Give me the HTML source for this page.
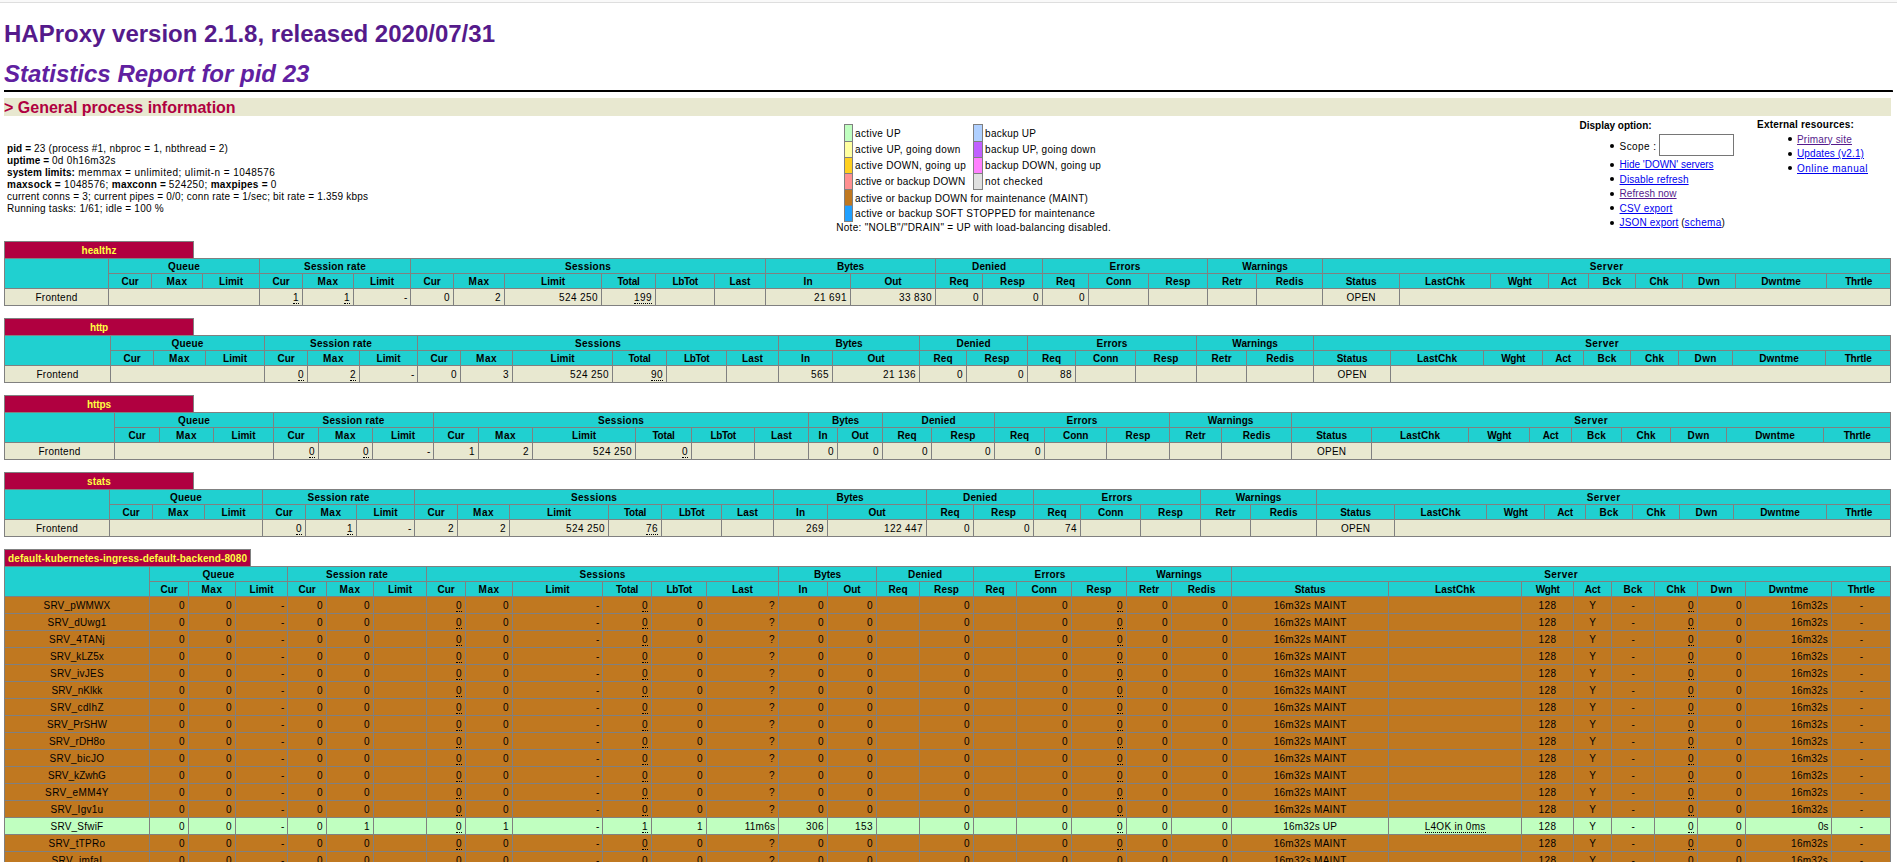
<!DOCTYPE html>
<html><head><meta charset="utf-8"><title>Statistics Report for HAProxy</title><style>
html{background:white;height:862px;overflow:hidden;}
body { font-family: "Liberation Sans", sans-serif; font-size: 12px; font-weight: normal; color: black; background: white; margin:0; padding:0; width:1897px; height:862px; overflow:hidden;}
#pg{position:relative; width:1897px; height:862px; overflow:hidden; padding:0 6px 0 4px; box-sizing:border-box;}
th,td { font-size: 10px; line-height:12px;}

h1 { font-size: 24px; margin-top:19px; margin-bottom: 12px;}
h1 a{color:#551a8b;text-decoration:none;position:relative;top:1px;}
h2 span,h3 span.t{position:relative;top:1px;}
h2 { font-family: "Liberation Sans", sans-serif; font-size: 24px; font-weight: bold; font-style: italic; color: #6020a0; margin-top: 0em; margin-bottom: 0em;}
h3 { font-family: "Liberation Sans", sans-serif; font-size: 16px; font-weight: bold; color: #b00040; background: #e8e8d0; margin-top: 0em; margin-bottom: 0em;}
li { margin-top: 0.25em; margin-right: 2em; list-style:none; position:relative;}
li::before{content:'';display:inline-block;width:4.2px;height:4.2px;border-radius:50%;background:black;margin-left:-9.3px;margin-right:5.1px;vertical-align:1.15px;}
table.lgd{position:relative;top:0px;}
table.lgd tr:nth-child(5) td{padding-bottom:0.5px;}
table.lgd td.backup_up{padding-right:3px;}
td.opt > *{position:relative;top:1px;left:0.5px;}
td.opt2 > *{position:relative;top:0px;}
td.opt li.sc0{position:relative;top:-1px;}
.hr {margin-top: 0.25em; border-color: black; border-bottom-style: solid;}
.titre	{background: #20D0D0;color: #000000; font-weight: bold; text-align: center;}
.frontend	{background: #e8e8d0;}
.backend	{background: #e8e8d0;}
.active_down		{background: #ff9090;}
.active_going_up		{background: #ffd020;}
.active_going_down	{background: #ffffa0;}
.active_up		{background: #c0ffc0;}
.active_draining		{background: #20a0FF;}
.active_no_check		{background: #e0e0e0;}
.backup_going_up		{background: #ff80ff;}
.backup_going_down	{background: #c060ff;}
.backup_up		{background: #b0d0ff;}
.maintain	{background: #c07820;}
.rls      {letter-spacing: 0.2em; margin-right: 1px;}
a.px {color: #ffff40; text-decoration: none;}
a.lfsb {color: #000000; text-decoration: none;}
a.l {color:#0000ee;}
a.v {color:#551a8b;}
table.tbl { border-collapse: collapse; border-style: none;}
table.fx{table-layout:fixed;width:1887px;}
table.tbl td { text-align: right; border-width: 1px 1px 1px 1px; border-style: solid solid solid solid; padding: 3px 3px 1px; border-color: gray; white-space: nowrap;}
table.tbl td.ac { text-align: center;}
table.tbl th { border-width: 1px; border-style: solid solid solid solid; border-color: gray; padding:2px 1px 0;}
table.tbl th.pxname { background: #b00040; color: #ffff40; font-weight: bold; border-style: solid solid none solid; padding: 3px 3px 1px; white-space: nowrap;}
table.tbl th.empty { border-style: none; empty-cells: hide; background: white;}
table.lgd { border-collapse: collapse; border-width: 1px; border-style: none none none solid; border-color: black;}
table.lgd td { border-width: 1px; border-style: solid solid solid solid; border-color: gray; padding: 3px 2px 1px;}
table.lgd td.noborder { border-style: none; padding: 3px 2px 1px; white-space: nowrap;}
u {text-decoration:none; border-bottom: 1px dotted black;}
input.sc{font-family:"Liberation Sans",sans-serif;font-size:13.333px;box-sizing:border-box;width:75px;height:22px;border:1px solid #767676;padding:1px 2px;margin:0 0 0 -1px;vertical-align:baseline;background:white;}
#topbar{position:absolute;left:0;top:0;width:1897px;height:3px;background:#f9f9f9;}
#topbar div{position:absolute;left:0;top:2px;width:100%;height:1px;background:#dedede;}
</style></head><body><div id="pg">
<div id="topbar"><div></div></div>
<h1><a href="#">HAProxy version 2.1.8, released 2020/07/31</a></h1>
<h2><span>Statistics Report for pid 23</span></h2>
<hr width="100%" class="hr">
<h3><span class="t">&gt; General process information</span></h3>
<table border="0"><tbody><tr><td align="left" nowrap="" width="1%">
<p><b><span style="letter-spacing: 0.1px;">pid = </span></b><span style="letter-spacing: 0.23px;"> 23 (process #1, nbproc = 1, nbthread = 2)</span><br>
<b><span style="letter-spacing: 0.09px;">uptime = </span></b><span style="letter-spacing: 0.3px;"> 0d 0h16m32s</span><br>
<b><span style="letter-spacing: 0.09px;">system limits:</span></b><span style="letter-spacing: 0.43px;"> memmax = unlimited; ulimit-n = 1048576</span><br>
<b><span style="letter-spacing: 0.28px;">maxsock = </span></b><span style="letter-spacing: 0.37px;"> 1048576; </span><b><span style="letter-spacing: 0.17px;">maxconn = </span></b><span style="letter-spacing: 0.37px;"> 524250; </span><b><span style="letter-spacing: 0.22px;">maxpipes = </span></b><span style="letter-spacing: 0.33px;"> 0</span><br>
<span class="xls" style="--x:-0.043"><span style="letter-spacing: 0.2px;">current conns = 3; current pipes = 0/0; conn rate = 1/sec; bit rate = 1.359 kbps</span></span><br><span style="letter-spacing: 0.23px;">
Running tasks: 1/61; idle = 100 %</span><br>
</p></td><td align="center" nowrap="">
<table class="lgd"><tbody><tr>
<td class="active_up"><span style="letter-spacing: 0.22px;">&nbsp;</span></td><td class="noborder"><span style="letter-spacing: 0.34px;">active UP </span></td><td class="backup_up"><span style="letter-spacing: 0.22px;">&nbsp;</span></td><td class="noborder"><span style="letter-spacing: 0.23px;">backup UP </span></td></tr><tr>
<td class="active_going_down"></td><td class="noborder"><span style="letter-spacing: 0.35px;">active UP, going down </span></td><td class="backup_going_down"></td><td class="noborder"><span style="letter-spacing: 0.3px;">backup UP, going down </span></td></tr><tr>
<td class="active_going_up"></td><td class="noborder"><span style="letter-spacing: 0.31px;">active DOWN, going up </span></td><td class="backup_going_up"></td><td class="noborder"><span style="letter-spacing: 0.26px;">backup DOWN, going up </span></td></tr><tr>
<td class="active_down"></td><td class="noborder xls" style="--x:-0.087"><span style="letter-spacing: 0.14px;">active or backup DOWN &nbsp;</span></td><td class="active_no_check"></td><td class="noborder"><span style="letter-spacing: 0.36px;">not checked </span></td></tr><tr>
<td class="maintain"></td><td class="noborder xls" style="--x:-0.043" colspan="3"><span style="letter-spacing: 0.24px;">active or backup DOWN for maintenance (MAINT) &nbsp;</span></td></tr><tr>
<td class="active_draining"></td><td class="noborder xls" style="--x:-0.053" colspan="3"><span style="letter-spacing: 0.29px;">active or backup SOFT STOPPED for maintenance &nbsp;</span></td></tr></tbody></table><span style="letter-spacing: 0.3px;">
Note: "NOLB"/"DRAIN" = UP with load-balancing disabled.</span></td><td class="opt" align="left" valign="top" nowrap="" width="1%"><b><span style="letter-spacing: -0.01px;">Display option:</span></b><ul style="margin-top: 0.25em;">
<li class="sc0"><span style="letter-spacing: 0.41px;">Scope : </span><form style="display:inline;"><input class="sc" type="text" value=""></form>
</li><li><a class="l" href="#"><span style="letter-spacing: -0.02px;">Hide 'DOWN' servers</span></a>
</li><li><a class="l" href="#"><span style="letter-spacing: 0.12px;">Disable refresh</span></a>
</li><li><a class="v" href="#"><span style="letter-spacing: 0.08px;">Refresh now</span></a>
</li><li><a class="l" href="#"><span style="letter-spacing: 0.19px;">CSV export</span></a>
</li><li><a class="l" href="#"><span style="letter-spacing: 0.16px;">JSON export</span></a><span style="letter-spacing: -0.05px;"> (</span><a class="l" href="#"><span style="letter-spacing: 0.33px;">schema</span></a><span style="letter-spacing: -0.05px;">)
</span></li></ul></td><td class="opt2" align="left" valign="top" nowrap="" width="1%"><b><span style="letter-spacing: 0.19px;">External resources:</span></b><ul style="margin-top: 0.25em;">
<li><a class="v" href="#"><span style="letter-spacing: 0.18px;">Primary site</span></a><br>
</li><li><a class="l" href="#"><span style="letter-spacing: 0.1px;">Updates (v2.1)</span></a><br>
</li><li><a class="l" href="#"><span style="letter-spacing: 0.5px;">Online manual</span></a><br>
</li></ul></td></tr></tbody></table>
<table class="tbl fx"><colgroup><col style="width:189px"><col></colgroup><tbody><tr class="titre"><th class="pxname"><a class="px"><span style="letter-spacing: 0.08px;">healthz</span></a></th><th class="empty"></th></tr></tbody></table>
<table class="tbl fx"><colgroup><col style="width:104px"><col style="width:43px"><col style="width:51px"><col style="width:57px"><col style="width:43px"><col style="width:51px"><col style="width:57px"><col style="width:43px"><col style="width:51px"><col style="width:97px"><col style="width:54px"><col style="width:59px"><col style="width:51px"><col style="width:85px"><col style="width:85px"><col style="width:47px"><col style="width:60px"><col style="width:46px"><col style="width:60px"><col style="width:59px"><col style="width:49px"><col style="width:66px"><col style="width:77px"><col style="width:91px"><col style="width:58px"><col style="width:40px"><col style="width:47px"><col style="width:47px"><col style="width:53px"><col style="width:91px"><col style="width:64px"></colgroup><tbody><tr class="titre"><th rowspan="2"></th><th colspan="3"><span style="letter-spacing: 0.18px;">Queue</span></th><th colspan="3"><span style="letter-spacing: 0.21px;">Session rate</span></th><th colspan="6"><span style="letter-spacing: 0.26px;">Sessions</span></th><th colspan="2"><span style="letter-spacing: -0.05px;">Bytes</span></th><th colspan="2"><span style="letter-spacing: 0.11px;">Denied</span></th><th colspan="3"><span style="letter-spacing: 0.16px;">Errors</span></th><th colspan="2"><span style="letter-spacing: 0.06px;">Warnings</span></th><th colspan="9"><span style="letter-spacing: 0.48px;">Server</span></th></tr>
<tr class="titre"><th><span style="letter-spacing: -0.07px;">Cur</span></th><th><span style="letter-spacing: 0.52px;">Max</span></th><th><span style="letter-spacing: 0.02px;">Limit</span></th><th><span style="letter-spacing: -0.07px;">Cur</span></th><th><span style="letter-spacing: 0.52px;">Max</span></th><th><span style="letter-spacing: 0.02px;">Limit</span></th><th><span style="letter-spacing: -0.07px;">Cur</span></th><th><span style="letter-spacing: 0.52px;">Max</span></th><th><span style="letter-spacing: 0.02px;">Limit</span></th><th><span style="letter-spacing: -0.18px;">Total</span></th><th><span style="letter-spacing: -0.35px;">LbTot</span></th><th><span style="letter-spacing: 0.11px;">Last</span></th><th><span style="letter-spacing: 0.06px;">In</span></th><th><span style="letter-spacing: -0.07px;">Out</span></th><th><span style="letter-spacing: 0.04px;">Req</span></th><th><span style="letter-spacing: 0.14px;">Resp</span></th><th><span style="letter-spacing: 0.04px;">Req</span></th><th><span style="letter-spacing: -0.14px;">Conn</span></th><th><span style="letter-spacing: 0.14px;">Resp</span></th><th><span style="letter-spacing: 0px;">Retr</span></th><th><span style="letter-spacing: 0.15px;">Redis</span></th><th><span style="letter-spacing: 0.07px;">Status</span></th><th><span style="letter-spacing: 0.08px;">LastChk</span></th><th><span style="letter-spacing: -0.25px;">Wght</span></th><th><span style="letter-spacing: -0.04px;">Act</span></th><th><span style="letter-spacing: 0.22px;">Bck</span></th><th><span style="letter-spacing: 0.04px;">Chk</span></th><th><span style="letter-spacing: 0.3px;">Dwn</span></th><th><span style="letter-spacing: 0.18px;">Dwntme</span></th><th><span style="letter-spacing: -0.13px;">Thrtle</span></th></tr>
<tr class="frontend"><td class="ac"><a class="lfsb"><span style="letter-spacing: 0.25px;">Frontend</span></a></td><td colspan="3"></td><td><u><span style="letter-spacing: 0.44px;">1</span></u></td><td><u><span style="letter-spacing: 0.44px;">1</span></u></td><td><span style="letter-spacing: -0.33px;">-</span></td><td><span style="letter-spacing: 0.44px;">0</span></td><td><span style="letter-spacing: 0.44px;">2</span></td><td><span style="letter-spacing: 0.44px;">52</span><span class="rls"><span style="letter-spacing: 2.44px;">4</span></span><span style="letter-spacing: 0.44px;">250</span></td><td><u><span style="letter-spacing: 0.44px;">199</span></u></td><td></td><td></td><td><span style="letter-spacing: 0.44px;">2</span><span class="rls"><span style="letter-spacing: 2.44px;">1</span></span><span style="letter-spacing: 0.44px;">691</span></td><td><span style="letter-spacing: 0.44px;">3</span><span class="rls"><span style="letter-spacing: 2.44px;">3</span></span><span style="letter-spacing: 0.44px;">830</span></td><td><span style="letter-spacing: 0.44px;">0</span></td><td><span style="letter-spacing: 0.44px;">0</span></td><td><span style="letter-spacing: 0.44px;">0</span></td><td></td><td></td><td></td><td></td><td class="ac"><span style="letter-spacing: 0.17px;">OPEN</span></td><td class="ac" colspan="8"></td></tr></tbody></table><p>
</p><table class="tbl fx"><colgroup><col style="width:189px"><col></colgroup><tbody><tr class="titre"><th class="pxname"><a class="px"><span style="letter-spacing: -0.22px;">http</span></a></th><th class="empty"></th></tr></tbody></table>
<table class="tbl fx"><colgroup><col style="width:106px"><col style="width:43px"><col style="width:52px"><col style="width:59px"><col style="width:43px"><col style="width:52px"><col style="width:58px"><col style="width:43px"><col style="width:52px"><col style="width:100px"><col style="width:54px"><col style="width:60px"><col style="width:52px"><col style="width:54px"><col style="width:87px"><col style="width:47px"><col style="width:61px"><col style="width:48px"><col style="width:60px"><col style="width:61px"><col style="width:50px"><col style="width:67px"><col style="width:77px"><col style="width:93px"><col style="width:59px"><col style="width:41px"><col style="width:47px"><col style="width:48px"><col style="width:54px"><col style="width:93px"><col style="width:65px"></colgroup><tbody><tr class="titre"><th rowspan="2"></th><th colspan="3"><span style="letter-spacing: 0.18px;">Queue</span></th><th colspan="3"><span style="letter-spacing: 0.21px;">Session rate</span></th><th colspan="6"><span style="letter-spacing: 0.26px;">Sessions</span></th><th colspan="2"><span style="letter-spacing: -0.05px;">Bytes</span></th><th colspan="2"><span style="letter-spacing: 0.11px;">Denied</span></th><th colspan="3"><span style="letter-spacing: 0.16px;">Errors</span></th><th colspan="2"><span style="letter-spacing: 0.06px;">Warnings</span></th><th colspan="9"><span style="letter-spacing: 0.48px;">Server</span></th></tr>
<tr class="titre"><th><span style="letter-spacing: -0.07px;">Cur</span></th><th><span style="letter-spacing: 0.52px;">Max</span></th><th><span style="letter-spacing: 0.02px;">Limit</span></th><th><span style="letter-spacing: -0.07px;">Cur</span></th><th><span style="letter-spacing: 0.52px;">Max</span></th><th><span style="letter-spacing: 0.02px;">Limit</span></th><th><span style="letter-spacing: -0.07px;">Cur</span></th><th><span style="letter-spacing: 0.52px;">Max</span></th><th><span style="letter-spacing: 0.02px;">Limit</span></th><th><span style="letter-spacing: -0.18px;">Total</span></th><th><span style="letter-spacing: -0.35px;">LbTot</span></th><th><span style="letter-spacing: 0.11px;">Last</span></th><th><span style="letter-spacing: 0.06px;">In</span></th><th><span style="letter-spacing: -0.07px;">Out</span></th><th><span style="letter-spacing: 0.04px;">Req</span></th><th><span style="letter-spacing: 0.14px;">Resp</span></th><th><span style="letter-spacing: 0.04px;">Req</span></th><th><span style="letter-spacing: -0.14px;">Conn</span></th><th><span style="letter-spacing: 0.14px;">Resp</span></th><th><span style="letter-spacing: 0px;">Retr</span></th><th><span style="letter-spacing: 0.15px;">Redis</span></th><th><span style="letter-spacing: 0.07px;">Status</span></th><th><span style="letter-spacing: 0.08px;">LastChk</span></th><th><span style="letter-spacing: -0.25px;">Wght</span></th><th><span style="letter-spacing: -0.04px;">Act</span></th><th><span style="letter-spacing: 0.22px;">Bck</span></th><th><span style="letter-spacing: 0.04px;">Chk</span></th><th><span style="letter-spacing: 0.3px;">Dwn</span></th><th><span style="letter-spacing: 0.18px;">Dwntme</span></th><th><span style="letter-spacing: -0.13px;">Thrtle</span></th></tr>
<tr class="frontend"><td class="ac"><a class="lfsb"><span style="letter-spacing: 0.25px;">Frontend</span></a></td><td colspan="3"></td><td><u><span style="letter-spacing: 0.44px;">0</span></u></td><td><u><span style="letter-spacing: 0.44px;">2</span></u></td><td><span style="letter-spacing: -0.33px;">-</span></td><td><span style="letter-spacing: 0.44px;">0</span></td><td><span style="letter-spacing: 0.44px;">3</span></td><td><span style="letter-spacing: 0.44px;">52</span><span class="rls"><span style="letter-spacing: 2.44px;">4</span></span><span style="letter-spacing: 0.44px;">250</span></td><td><u><span style="letter-spacing: 0.44px;">90</span></u></td><td></td><td></td><td><span style="letter-spacing: 0.44px;">565</span></td><td><span style="letter-spacing: 0.44px;">2</span><span class="rls"><span style="letter-spacing: 2.44px;">1</span></span><span style="letter-spacing: 0.44px;">136</span></td><td><span style="letter-spacing: 0.44px;">0</span></td><td><span style="letter-spacing: 0.44px;">0</span></td><td><span style="letter-spacing: 0.44px;">88</span></td><td></td><td></td><td></td><td></td><td class="ac"><span style="letter-spacing: 0.17px;">OPEN</span></td><td class="ac" colspan="8"></td></tr></tbody></table><p>
</p><table class="tbl fx"><colgroup><col style="width:189px"><col></colgroup><tbody><tr class="titre"><th class="pxname"><a class="px"><span style="letter-spacing: -0.09px;">https</span></a></th><th class="empty"></th></tr></tbody></table>
<table class="tbl fx"><colgroup><col style="width:110px"><col style="width:45px"><col style="width:54px"><col style="width:60px"><col style="width:45px"><col style="width:54px"><col style="width:61px"><col style="width:45px"><col style="width:54px"><col style="width:103px"><col style="width:56px"><col style="width:63px"><col style="width:54px"><col style="width:29px"><col style="width:45px"><col style="width:49px"><col style="width:63px"><col style="width:50px"><col style="width:62px"><col style="width:63px"><col style="width:52px"><col style="width:70px"><col style="width:80px"><col style="width:97px"><col style="width:61px"><col style="width:42px"><col style="width:50px"><col style="width:49px"><col style="width:56px"><col style="width:97px"><col style="width:67px"></colgroup><tbody><tr class="titre"><th rowspan="2"></th><th colspan="3"><span style="letter-spacing: 0.18px;">Queue</span></th><th colspan="3"><span style="letter-spacing: 0.21px;">Session rate</span></th><th colspan="6"><span style="letter-spacing: 0.26px;">Sessions</span></th><th colspan="2"><span style="letter-spacing: -0.05px;">Bytes</span></th><th colspan="2"><span style="letter-spacing: 0.11px;">Denied</span></th><th colspan="3"><span style="letter-spacing: 0.16px;">Errors</span></th><th colspan="2"><span style="letter-spacing: 0.06px;">Warnings</span></th><th colspan="9"><span style="letter-spacing: 0.48px;">Server</span></th></tr>
<tr class="titre"><th><span style="letter-spacing: -0.07px;">Cur</span></th><th><span style="letter-spacing: 0.52px;">Max</span></th><th><span style="letter-spacing: 0.02px;">Limit</span></th><th><span style="letter-spacing: -0.07px;">Cur</span></th><th><span style="letter-spacing: 0.52px;">Max</span></th><th><span style="letter-spacing: 0.02px;">Limit</span></th><th><span style="letter-spacing: -0.07px;">Cur</span></th><th><span style="letter-spacing: 0.52px;">Max</span></th><th><span style="letter-spacing: 0.02px;">Limit</span></th><th><span style="letter-spacing: -0.18px;">Total</span></th><th><span style="letter-spacing: -0.35px;">LbTot</span></th><th><span style="letter-spacing: 0.11px;">Last</span></th><th><span style="letter-spacing: 0.06px;">In</span></th><th><span style="letter-spacing: -0.07px;">Out</span></th><th><span style="letter-spacing: 0.04px;">Req</span></th><th><span style="letter-spacing: 0.14px;">Resp</span></th><th><span style="letter-spacing: 0.04px;">Req</span></th><th><span style="letter-spacing: -0.14px;">Conn</span></th><th><span style="letter-spacing: 0.14px;">Resp</span></th><th><span style="letter-spacing: 0px;">Retr</span></th><th><span style="letter-spacing: 0.15px;">Redis</span></th><th><span style="letter-spacing: 0.07px;">Status</span></th><th><span style="letter-spacing: 0.08px;">LastChk</span></th><th><span style="letter-spacing: -0.25px;">Wght</span></th><th><span style="letter-spacing: -0.04px;">Act</span></th><th><span style="letter-spacing: 0.22px;">Bck</span></th><th><span style="letter-spacing: 0.04px;">Chk</span></th><th><span style="letter-spacing: 0.3px;">Dwn</span></th><th><span style="letter-spacing: 0.18px;">Dwntme</span></th><th><span style="letter-spacing: -0.13px;">Thrtle</span></th></tr>
<tr class="frontend"><td class="ac"><a class="lfsb"><span style="letter-spacing: 0.25px;">Frontend</span></a></td><td colspan="3"></td><td><u><span style="letter-spacing: 0.44px;">0</span></u></td><td><u><span style="letter-spacing: 0.44px;">0</span></u></td><td><span style="letter-spacing: -0.33px;">-</span></td><td><span style="letter-spacing: 0.44px;">1</span></td><td><span style="letter-spacing: 0.44px;">2</span></td><td><span style="letter-spacing: 0.44px;">52</span><span class="rls"><span style="letter-spacing: 2.44px;">4</span></span><span style="letter-spacing: 0.44px;">250</span></td><td><u><span style="letter-spacing: 0.44px;">0</span></u></td><td></td><td></td><td><span style="letter-spacing: 0.44px;">0</span></td><td><span style="letter-spacing: 0.44px;">0</span></td><td><span style="letter-spacing: 0.44px;">0</span></td><td><span style="letter-spacing: 0.44px;">0</span></td><td><span style="letter-spacing: 0.44px;">0</span></td><td></td><td></td><td></td><td></td><td class="ac"><span style="letter-spacing: 0.17px;">OPEN</span></td><td class="ac" colspan="8"></td></tr></tbody></table><p>
</p><table class="tbl fx"><colgroup><col style="width:189px"><col></colgroup><tbody><tr class="titre"><th class="pxname"><a class="px"><span style="letter-spacing: 0.13px;">stats</span></a></th><th class="empty"></th></tr></tbody></table>
<table class="tbl fx"><colgroup><col style="width:105px"><col style="width:43px"><col style="width:52px"><col style="width:58px"><col style="width:43px"><col style="width:51px"><col style="width:58px"><col style="width:43px"><col style="width:52px"><col style="width:99px"><col style="width:53px"><col style="width:60px"><col style="width:52px"><col style="width:54px"><col style="width:99px"><col style="width:47px"><col style="width:60px"><col style="width:47px"><col style="width:60px"><col style="width:60px"><col style="width:50px"><col style="width:66px"><col style="width:78px"><col style="width:92px"><col style="width:58px"><col style="width:41px"><col style="width:47px"><col style="width:47px"><col style="width:54px"><col style="width:93px"><col style="width:64px"></colgroup><tbody><tr class="titre"><th rowspan="2"></th><th colspan="3"><span style="letter-spacing: 0.18px;">Queue</span></th><th colspan="3"><span style="letter-spacing: 0.21px;">Session rate</span></th><th colspan="6"><span style="letter-spacing: 0.26px;">Sessions</span></th><th colspan="2"><span style="letter-spacing: -0.05px;">Bytes</span></th><th colspan="2"><span style="letter-spacing: 0.11px;">Denied</span></th><th colspan="3"><span style="letter-spacing: 0.16px;">Errors</span></th><th colspan="2"><span style="letter-spacing: 0.06px;">Warnings</span></th><th colspan="9"><span style="letter-spacing: 0.48px;">Server</span></th></tr>
<tr class="titre"><th><span style="letter-spacing: -0.07px;">Cur</span></th><th><span style="letter-spacing: 0.52px;">Max</span></th><th><span style="letter-spacing: 0.02px;">Limit</span></th><th><span style="letter-spacing: -0.07px;">Cur</span></th><th><span style="letter-spacing: 0.52px;">Max</span></th><th><span style="letter-spacing: 0.02px;">Limit</span></th><th><span style="letter-spacing: -0.07px;">Cur</span></th><th><span style="letter-spacing: 0.52px;">Max</span></th><th><span style="letter-spacing: 0.02px;">Limit</span></th><th><span style="letter-spacing: -0.18px;">Total</span></th><th><span style="letter-spacing: -0.35px;">LbTot</span></th><th><span style="letter-spacing: 0.11px;">Last</span></th><th><span style="letter-spacing: 0.06px;">In</span></th><th><span style="letter-spacing: -0.07px;">Out</span></th><th><span style="letter-spacing: 0.04px;">Req</span></th><th><span style="letter-spacing: 0.14px;">Resp</span></th><th><span style="letter-spacing: 0.04px;">Req</span></th><th><span style="letter-spacing: -0.14px;">Conn</span></th><th><span style="letter-spacing: 0.14px;">Resp</span></th><th><span style="letter-spacing: 0px;">Retr</span></th><th><span style="letter-spacing: 0.15px;">Redis</span></th><th><span style="letter-spacing: 0.07px;">Status</span></th><th><span style="letter-spacing: 0.08px;">LastChk</span></th><th><span style="letter-spacing: -0.25px;">Wght</span></th><th><span style="letter-spacing: -0.04px;">Act</span></th><th><span style="letter-spacing: 0.22px;">Bck</span></th><th><span style="letter-spacing: 0.04px;">Chk</span></th><th><span style="letter-spacing: 0.3px;">Dwn</span></th><th><span style="letter-spacing: 0.18px;">Dwntme</span></th><th><span style="letter-spacing: -0.13px;">Thrtle</span></th></tr>
<tr class="frontend"><td class="ac"><a class="lfsb"><span style="letter-spacing: 0.25px;">Frontend</span></a></td><td colspan="3"></td><td><u><span style="letter-spacing: 0.44px;">0</span></u></td><td><u><span style="letter-spacing: 0.44px;">1</span></u></td><td><span style="letter-spacing: -0.33px;">-</span></td><td><span style="letter-spacing: 0.44px;">2</span></td><td><span style="letter-spacing: 0.44px;">2</span></td><td><span style="letter-spacing: 0.44px;">52</span><span class="rls"><span style="letter-spacing: 2.44px;">4</span></span><span style="letter-spacing: 0.44px;">250</span></td><td><u><span style="letter-spacing: 0.44px;">76</span></u></td><td></td><td></td><td><span style="letter-spacing: 0.44px;">269</span></td><td><span style="letter-spacing: 0.44px;">12</span><span class="rls"><span style="letter-spacing: 2.44px;">2</span></span><span style="letter-spacing: 0.44px;">447</span></td><td><span style="letter-spacing: 0.44px;">0</span></td><td><span style="letter-spacing: 0.44px;">0</span></td><td><span style="letter-spacing: 0.44px;">74</span></td><td></td><td></td><td></td><td></td><td class="ac"><span style="letter-spacing: 0.17px;">OPEN</span></td><td class="ac" colspan="8"></td></tr></tbody></table><p>
</p><table class="tbl fx"><colgroup><col style="width:246px"><col></colgroup><tbody><tr class="titre"><th class="pxname"><a class="px"><span style="letter-spacing: 0.11px;">default-kubernetes-ingress-default-backend-8080</span></a></th><th class="empty"></th></tr></tbody></table>
<table class="tbl fx"><colgroup><col style="width:145px"><col style="width:39px"><col style="width:47px"><col style="width:52px"><col style="width:39px"><col style="width:47px"><col style="width:53px"><col style="width:39px"><col style="width:47px"><col style="width:90px"><col style="width:49px"><col style="width:55px"><col style="width:72px"><col style="width:49px"><col style="width:49px"><col style="width:43px"><col style="width:54px"><col style="width:43px"><col style="width:55px"><col style="width:55px"><col style="width:45px"><col style="width:60px"><col style="width:157px"><col style="width:133px"><col style="width:52px"><col style="width:38px"><col style="width:43px"><col style="width:43px"><col style="width:48px"><col style="width:86px"><col style="width:59px"></colgroup><tbody><tr class="titre"><th rowspan="2"></th><th colspan="3"><span style="letter-spacing: 0.18px;">Queue</span></th><th colspan="3"><span style="letter-spacing: 0.21px;">Session rate</span></th><th colspan="6"><span style="letter-spacing: 0.26px;">Sessions</span></th><th colspan="2"><span style="letter-spacing: -0.05px;">Bytes</span></th><th colspan="2"><span style="letter-spacing: 0.11px;">Denied</span></th><th colspan="3"><span style="letter-spacing: 0.16px;">Errors</span></th><th colspan="2"><span style="letter-spacing: 0.06px;">Warnings</span></th><th colspan="9"><span style="letter-spacing: 0.48px;">Server</span></th></tr>
<tr class="titre"><th><span style="letter-spacing: -0.07px;">Cur</span></th><th><span style="letter-spacing: 0.52px;">Max</span></th><th><span style="letter-spacing: 0.02px;">Limit</span></th><th><span style="letter-spacing: -0.07px;">Cur</span></th><th><span style="letter-spacing: 0.52px;">Max</span></th><th><span style="letter-spacing: 0.02px;">Limit</span></th><th><span style="letter-spacing: -0.07px;">Cur</span></th><th><span style="letter-spacing: 0.52px;">Max</span></th><th><span style="letter-spacing: 0.02px;">Limit</span></th><th><span style="letter-spacing: -0.18px;">Total</span></th><th><span style="letter-spacing: -0.35px;">LbTot</span></th><th><span style="letter-spacing: 0.11px;">Last</span></th><th><span style="letter-spacing: 0.06px;">In</span></th><th><span style="letter-spacing: -0.07px;">Out</span></th><th><span style="letter-spacing: 0.04px;">Req</span></th><th><span style="letter-spacing: 0.14px;">Resp</span></th><th><span style="letter-spacing: 0.04px;">Req</span></th><th><span style="letter-spacing: -0.14px;">Conn</span></th><th><span style="letter-spacing: 0.14px;">Resp</span></th><th><span style="letter-spacing: 0px;">Retr</span></th><th><span style="letter-spacing: 0.15px;">Redis</span></th><th><span style="letter-spacing: 0.07px;">Status</span></th><th><span style="letter-spacing: 0.08px;">LastChk</span></th><th><span style="letter-spacing: -0.25px;">Wght</span></th><th><span style="letter-spacing: -0.04px;">Act</span></th><th><span style="letter-spacing: 0.22px;">Bck</span></th><th><span style="letter-spacing: 0.04px;">Chk</span></th><th><span style="letter-spacing: 0.3px;">Dwn</span></th><th><span style="letter-spacing: 0.18px;">Dwntme</span></th><th><span style="letter-spacing: -0.13px;">Thrtle</span></th></tr>
<tr class="maintain"><td class="ac"><a class="lfsb"><span style="letter-spacing: 0.16px;">SRV_pWMWX</span></a></td><td><span style="letter-spacing: 0.44px;">0</span></td><td><span style="letter-spacing: 0.44px;">0</span></td><td><span style="letter-spacing: -0.33px;">-</span></td><td><span style="letter-spacing: 0.44px;">0</span></td><td><span style="letter-spacing: 0.44px;">0</span></td><td></td><td><u><span style="letter-spacing: 0.44px;">0</span></u></td><td><span style="letter-spacing: 0.44px;">0</span></td><td><span style="letter-spacing: -0.33px;">-</span></td><td><u><span style="letter-spacing: 0.44px;">0</span></u></td><td><span style="letter-spacing: 0.44px;">0</span></td><td><span style="letter-spacing: 0.44px;">?</span></td><td><span style="letter-spacing: 0.44px;">0</span></td><td><span style="letter-spacing: 0.44px;">0</span></td><td></td><td><span style="letter-spacing: 0.44px;">0</span></td><td></td><td><span style="letter-spacing: 0.44px;">0</span></td><td><u><span style="letter-spacing: 0.44px;">0</span></u></td><td><span style="letter-spacing: 0.44px;">0</span></td><td><span style="letter-spacing: 0.44px;">0</span></td><td class="ac"><span style="letter-spacing: 0.29px;">16m32s MAINT</span></td><td class="ac"></td><td class="ac"><span style="letter-spacing: 0.44px;">128</span></td><td class="ac"><span style="letter-spacing: 0.33px;">Y</span></td><td class="ac"><span style="letter-spacing: -0.33px;">-</span></td><td><u><span style="letter-spacing: 0.44px;">0</span></u></td><td><span style="letter-spacing: 0.44px;">0</span></td><td><span style="letter-spacing: 0.24px;">16m32s</span></td><td class="ac"><span style="letter-spacing: -0.33px;">-</span></td></tr>
<tr class="maintain"><td class="ac"><a class="lfsb"><span style="letter-spacing: 0.19px;">SRV_dUwg1</span></a></td><td><span style="letter-spacing: 0.44px;">0</span></td><td><span style="letter-spacing: 0.44px;">0</span></td><td><span style="letter-spacing: -0.33px;">-</span></td><td><span style="letter-spacing: 0.44px;">0</span></td><td><span style="letter-spacing: 0.44px;">0</span></td><td></td><td><u><span style="letter-spacing: 0.44px;">0</span></u></td><td><span style="letter-spacing: 0.44px;">0</span></td><td><span style="letter-spacing: -0.33px;">-</span></td><td><u><span style="letter-spacing: 0.44px;">0</span></u></td><td><span style="letter-spacing: 0.44px;">0</span></td><td><span style="letter-spacing: 0.44px;">?</span></td><td><span style="letter-spacing: 0.44px;">0</span></td><td><span style="letter-spacing: 0.44px;">0</span></td><td></td><td><span style="letter-spacing: 0.44px;">0</span></td><td></td><td><span style="letter-spacing: 0.44px;">0</span></td><td><u><span style="letter-spacing: 0.44px;">0</span></u></td><td><span style="letter-spacing: 0.44px;">0</span></td><td><span style="letter-spacing: 0.44px;">0</span></td><td class="ac"><span style="letter-spacing: 0.29px;">16m32s MAINT</span></td><td class="ac"></td><td class="ac"><span style="letter-spacing: 0.44px;">128</span></td><td class="ac"><span style="letter-spacing: 0.33px;">Y</span></td><td class="ac"><span style="letter-spacing: -0.33px;">-</span></td><td><u><span style="letter-spacing: 0.44px;">0</span></u></td><td><span style="letter-spacing: 0.44px;">0</span></td><td><span style="letter-spacing: 0.24px;">16m32s</span></td><td class="ac"><span style="letter-spacing: -0.33px;">-</span></td></tr>
<tr class="maintain"><td class="ac"><a class="lfsb"><span style="letter-spacing: 0.34px;">SRV_4TANj</span></a></td><td><span style="letter-spacing: 0.44px;">0</span></td><td><span style="letter-spacing: 0.44px;">0</span></td><td><span style="letter-spacing: -0.33px;">-</span></td><td><span style="letter-spacing: 0.44px;">0</span></td><td><span style="letter-spacing: 0.44px;">0</span></td><td></td><td><u><span style="letter-spacing: 0.44px;">0</span></u></td><td><span style="letter-spacing: 0.44px;">0</span></td><td><span style="letter-spacing: -0.33px;">-</span></td><td><u><span style="letter-spacing: 0.44px;">0</span></u></td><td><span style="letter-spacing: 0.44px;">0</span></td><td><span style="letter-spacing: 0.44px;">?</span></td><td><span style="letter-spacing: 0.44px;">0</span></td><td><span style="letter-spacing: 0.44px;">0</span></td><td></td><td><span style="letter-spacing: 0.44px;">0</span></td><td></td><td><span style="letter-spacing: 0.44px;">0</span></td><td><u><span style="letter-spacing: 0.44px;">0</span></u></td><td><span style="letter-spacing: 0.44px;">0</span></td><td><span style="letter-spacing: 0.44px;">0</span></td><td class="ac"><span style="letter-spacing: 0.29px;">16m32s MAINT</span></td><td class="ac"></td><td class="ac"><span style="letter-spacing: 0.44px;">128</span></td><td class="ac"><span style="letter-spacing: 0.33px;">Y</span></td><td class="ac"><span style="letter-spacing: -0.33px;">-</span></td><td><u><span style="letter-spacing: 0.44px;">0</span></u></td><td><span style="letter-spacing: 0.44px;">0</span></td><td><span style="letter-spacing: 0.24px;">16m32s</span></td><td class="ac"><span style="letter-spacing: -0.33px;">-</span></td></tr>
<tr class="maintain"><td class="ac"><a class="lfsb"><span style="letter-spacing: 0.07px;">SRV_kLZ5x</span></a></td><td><span style="letter-spacing: 0.44px;">0</span></td><td><span style="letter-spacing: 0.44px;">0</span></td><td><span style="letter-spacing: -0.33px;">-</span></td><td><span style="letter-spacing: 0.44px;">0</span></td><td><span style="letter-spacing: 0.44px;">0</span></td><td></td><td><u><span style="letter-spacing: 0.44px;">0</span></u></td><td><span style="letter-spacing: 0.44px;">0</span></td><td><span style="letter-spacing: -0.33px;">-</span></td><td><u><span style="letter-spacing: 0.44px;">0</span></u></td><td><span style="letter-spacing: 0.44px;">0</span></td><td><span style="letter-spacing: 0.44px;">?</span></td><td><span style="letter-spacing: 0.44px;">0</span></td><td><span style="letter-spacing: 0.44px;">0</span></td><td></td><td><span style="letter-spacing: 0.44px;">0</span></td><td></td><td><span style="letter-spacing: 0.44px;">0</span></td><td><u><span style="letter-spacing: 0.44px;">0</span></u></td><td><span style="letter-spacing: 0.44px;">0</span></td><td><span style="letter-spacing: 0.44px;">0</span></td><td class="ac"><span style="letter-spacing: 0.29px;">16m32s MAINT</span></td><td class="ac"></td><td class="ac"><span style="letter-spacing: 0.44px;">128</span></td><td class="ac"><span style="letter-spacing: 0.33px;">Y</span></td><td class="ac"><span style="letter-spacing: -0.33px;">-</span></td><td><u><span style="letter-spacing: 0.44px;">0</span></u></td><td><span style="letter-spacing: 0.44px;">0</span></td><td><span style="letter-spacing: 0.24px;">16m32s</span></td><td class="ac"><span style="letter-spacing: -0.33px;">-</span></td></tr>
<tr class="maintain"><td class="ac"><a class="lfsb"><span style="letter-spacing: 0.26px;">SRV_ivJES</span></a></td><td><span style="letter-spacing: 0.44px;">0</span></td><td><span style="letter-spacing: 0.44px;">0</span></td><td><span style="letter-spacing: -0.33px;">-</span></td><td><span style="letter-spacing: 0.44px;">0</span></td><td><span style="letter-spacing: 0.44px;">0</span></td><td></td><td><u><span style="letter-spacing: 0.44px;">0</span></u></td><td><span style="letter-spacing: 0.44px;">0</span></td><td><span style="letter-spacing: -0.33px;">-</span></td><td><u><span style="letter-spacing: 0.44px;">0</span></u></td><td><span style="letter-spacing: 0.44px;">0</span></td><td><span style="letter-spacing: 0.44px;">?</span></td><td><span style="letter-spacing: 0.44px;">0</span></td><td><span style="letter-spacing: 0.44px;">0</span></td><td></td><td><span style="letter-spacing: 0.44px;">0</span></td><td></td><td><span style="letter-spacing: 0.44px;">0</span></td><td><u><span style="letter-spacing: 0.44px;">0</span></u></td><td><span style="letter-spacing: 0.44px;">0</span></td><td><span style="letter-spacing: 0.44px;">0</span></td><td class="ac"><span style="letter-spacing: 0.29px;">16m32s MAINT</span></td><td class="ac"></td><td class="ac"><span style="letter-spacing: 0.44px;">128</span></td><td class="ac"><span style="letter-spacing: 0.33px;">Y</span></td><td class="ac"><span style="letter-spacing: -0.33px;">-</span></td><td><u><span style="letter-spacing: 0.44px;">0</span></u></td><td><span style="letter-spacing: 0.44px;">0</span></td><td><span style="letter-spacing: 0.24px;">16m32s</span></td><td class="ac"><span style="letter-spacing: -0.33px;">-</span></td></tr>
<tr class="maintain"><td class="ac"><a class="lfsb"><span style="letter-spacing: 0.05px;">SRV_nKlkk</span></a></td><td><span style="letter-spacing: 0.44px;">0</span></td><td><span style="letter-spacing: 0.44px;">0</span></td><td><span style="letter-spacing: -0.33px;">-</span></td><td><span style="letter-spacing: 0.44px;">0</span></td><td><span style="letter-spacing: 0.44px;">0</span></td><td></td><td><u><span style="letter-spacing: 0.44px;">0</span></u></td><td><span style="letter-spacing: 0.44px;">0</span></td><td><span style="letter-spacing: -0.33px;">-</span></td><td><u><span style="letter-spacing: 0.44px;">0</span></u></td><td><span style="letter-spacing: 0.44px;">0</span></td><td><span style="letter-spacing: 0.44px;">?</span></td><td><span style="letter-spacing: 0.44px;">0</span></td><td><span style="letter-spacing: 0.44px;">0</span></td><td></td><td><span style="letter-spacing: 0.44px;">0</span></td><td></td><td><span style="letter-spacing: 0.44px;">0</span></td><td><u><span style="letter-spacing: 0.44px;">0</span></u></td><td><span style="letter-spacing: 0.44px;">0</span></td><td><span style="letter-spacing: 0.44px;">0</span></td><td class="ac"><span style="letter-spacing: 0.29px;">16m32s MAINT</span></td><td class="ac"></td><td class="ac"><span style="letter-spacing: 0.44px;">128</span></td><td class="ac"><span style="letter-spacing: 0.33px;">Y</span></td><td class="ac"><span style="letter-spacing: -0.33px;">-</span></td><td><u><span style="letter-spacing: 0.44px;">0</span></u></td><td><span style="letter-spacing: 0.44px;">0</span></td><td><span style="letter-spacing: 0.24px;">16m32s</span></td><td class="ac"><span style="letter-spacing: -0.33px;">-</span></td></tr>
<tr class="maintain"><td class="ac"><a class="lfsb"><span style="letter-spacing: 0.38px;">SRV_cdlhZ</span></a></td><td><span style="letter-spacing: 0.44px;">0</span></td><td><span style="letter-spacing: 0.44px;">0</span></td><td><span style="letter-spacing: -0.33px;">-</span></td><td><span style="letter-spacing: 0.44px;">0</span></td><td><span style="letter-spacing: 0.44px;">0</span></td><td></td><td><u><span style="letter-spacing: 0.44px;">0</span></u></td><td><span style="letter-spacing: 0.44px;">0</span></td><td><span style="letter-spacing: -0.33px;">-</span></td><td><u><span style="letter-spacing: 0.44px;">0</span></u></td><td><span style="letter-spacing: 0.44px;">0</span></td><td><span style="letter-spacing: 0.44px;">?</span></td><td><span style="letter-spacing: 0.44px;">0</span></td><td><span style="letter-spacing: 0.44px;">0</span></td><td></td><td><span style="letter-spacing: 0.44px;">0</span></td><td></td><td><span style="letter-spacing: 0.44px;">0</span></td><td><u><span style="letter-spacing: 0.44px;">0</span></u></td><td><span style="letter-spacing: 0.44px;">0</span></td><td><span style="letter-spacing: 0.44px;">0</span></td><td class="ac"><span style="letter-spacing: 0.29px;">16m32s MAINT</span></td><td class="ac"></td><td class="ac"><span style="letter-spacing: 0.44px;">128</span></td><td class="ac"><span style="letter-spacing: 0.33px;">Y</span></td><td class="ac"><span style="letter-spacing: -0.33px;">-</span></td><td><u><span style="letter-spacing: 0.44px;">0</span></u></td><td><span style="letter-spacing: 0.44px;">0</span></td><td><span style="letter-spacing: 0.24px;">16m32s</span></td><td class="ac"><span style="letter-spacing: -0.33px;">-</span></td></tr>
<tr class="maintain"><td class="ac"><a class="lfsb"><span style="letter-spacing: 0.06px;">SRV_PrSHW</span></a></td><td><span style="letter-spacing: 0.44px;">0</span></td><td><span style="letter-spacing: 0.44px;">0</span></td><td><span style="letter-spacing: -0.33px;">-</span></td><td><span style="letter-spacing: 0.44px;">0</span></td><td><span style="letter-spacing: 0.44px;">0</span></td><td></td><td><u><span style="letter-spacing: 0.44px;">0</span></u></td><td><span style="letter-spacing: 0.44px;">0</span></td><td><span style="letter-spacing: -0.33px;">-</span></td><td><u><span style="letter-spacing: 0.44px;">0</span></u></td><td><span style="letter-spacing: 0.44px;">0</span></td><td><span style="letter-spacing: 0.44px;">?</span></td><td><span style="letter-spacing: 0.44px;">0</span></td><td><span style="letter-spacing: 0.44px;">0</span></td><td></td><td><span style="letter-spacing: 0.44px;">0</span></td><td></td><td><span style="letter-spacing: 0.44px;">0</span></td><td><u><span style="letter-spacing: 0.44px;">0</span></u></td><td><span style="letter-spacing: 0.44px;">0</span></td><td><span style="letter-spacing: 0.44px;">0</span></td><td class="ac"><span style="letter-spacing: 0.29px;">16m32s MAINT</span></td><td class="ac"></td><td class="ac"><span style="letter-spacing: 0.44px;">128</span></td><td class="ac"><span style="letter-spacing: 0.33px;">Y</span></td><td class="ac"><span style="letter-spacing: -0.33px;">-</span></td><td><u><span style="letter-spacing: 0.44px;">0</span></u></td><td><span style="letter-spacing: 0.44px;">0</span></td><td><span style="letter-spacing: 0.24px;">16m32s</span></td><td class="ac"><span style="letter-spacing: -0.33px;">-</span></td></tr>
<tr class="maintain"><td class="ac"><a class="lfsb"><span style="letter-spacing: 0.11px;">SRV_rDH8o</span></a></td><td><span style="letter-spacing: 0.44px;">0</span></td><td><span style="letter-spacing: 0.44px;">0</span></td><td><span style="letter-spacing: -0.33px;">-</span></td><td><span style="letter-spacing: 0.44px;">0</span></td><td><span style="letter-spacing: 0.44px;">0</span></td><td></td><td><u><span style="letter-spacing: 0.44px;">0</span></u></td><td><span style="letter-spacing: 0.44px;">0</span></td><td><span style="letter-spacing: -0.33px;">-</span></td><td><u><span style="letter-spacing: 0.44px;">0</span></u></td><td><span style="letter-spacing: 0.44px;">0</span></td><td><span style="letter-spacing: 0.44px;">?</span></td><td><span style="letter-spacing: 0.44px;">0</span></td><td><span style="letter-spacing: 0.44px;">0</span></td><td></td><td><span style="letter-spacing: 0.44px;">0</span></td><td></td><td><span style="letter-spacing: 0.44px;">0</span></td><td><u><span style="letter-spacing: 0.44px;">0</span></u></td><td><span style="letter-spacing: 0.44px;">0</span></td><td><span style="letter-spacing: 0.44px;">0</span></td><td class="ac"><span style="letter-spacing: 0.29px;">16m32s MAINT</span></td><td class="ac"></td><td class="ac"><span style="letter-spacing: 0.44px;">128</span></td><td class="ac"><span style="letter-spacing: 0.33px;">Y</span></td><td class="ac"><span style="letter-spacing: -0.33px;">-</span></td><td><u><span style="letter-spacing: 0.44px;">0</span></u></td><td><span style="letter-spacing: 0.44px;">0</span></td><td><span style="letter-spacing: 0.24px;">16m32s</span></td><td class="ac"><span style="letter-spacing: -0.33px;">-</span></td></tr>
<tr class="maintain"><td class="ac"><a class="lfsb"><span style="letter-spacing: 0.37px;">SRV_bicJO</span></a></td><td><span style="letter-spacing: 0.44px;">0</span></td><td><span style="letter-spacing: 0.44px;">0</span></td><td><span style="letter-spacing: -0.33px;">-</span></td><td><span style="letter-spacing: 0.44px;">0</span></td><td><span style="letter-spacing: 0.44px;">0</span></td><td></td><td><u><span style="letter-spacing: 0.44px;">0</span></u></td><td><span style="letter-spacing: 0.44px;">0</span></td><td><span style="letter-spacing: -0.33px;">-</span></td><td><u><span style="letter-spacing: 0.44px;">0</span></u></td><td><span style="letter-spacing: 0.44px;">0</span></td><td><span style="letter-spacing: 0.44px;">?</span></td><td><span style="letter-spacing: 0.44px;">0</span></td><td><span style="letter-spacing: 0.44px;">0</span></td><td></td><td><span style="letter-spacing: 0.44px;">0</span></td><td></td><td><span style="letter-spacing: 0.44px;">0</span></td><td><u><span style="letter-spacing: 0.44px;">0</span></u></td><td><span style="letter-spacing: 0.44px;">0</span></td><td><span style="letter-spacing: 0.44px;">0</span></td><td class="ac"><span style="letter-spacing: 0.29px;">16m32s MAINT</span></td><td class="ac"></td><td class="ac"><span style="letter-spacing: 0.44px;">128</span></td><td class="ac"><span style="letter-spacing: 0.33px;">Y</span></td><td class="ac"><span style="letter-spacing: -0.33px;">-</span></td><td><u><span style="letter-spacing: 0.44px;">0</span></u></td><td><span style="letter-spacing: 0.44px;">0</span></td><td><span style="letter-spacing: 0.24px;">16m32s</span></td><td class="ac"><span style="letter-spacing: -0.33px;">-</span></td></tr>
<tr class="maintain"><td class="ac"><a class="lfsb"><span style="letter-spacing: 0.02px;">SRV_kZwhG</span></a></td><td><span style="letter-spacing: 0.44px;">0</span></td><td><span style="letter-spacing: 0.44px;">0</span></td><td><span style="letter-spacing: -0.33px;">-</span></td><td><span style="letter-spacing: 0.44px;">0</span></td><td><span style="letter-spacing: 0.44px;">0</span></td><td></td><td><u><span style="letter-spacing: 0.44px;">0</span></u></td><td><span style="letter-spacing: 0.44px;">0</span></td><td><span style="letter-spacing: -0.33px;">-</span></td><td><u><span style="letter-spacing: 0.44px;">0</span></u></td><td><span style="letter-spacing: 0.44px;">0</span></td><td><span style="letter-spacing: 0.44px;">?</span></td><td><span style="letter-spacing: 0.44px;">0</span></td><td><span style="letter-spacing: 0.44px;">0</span></td><td></td><td><span style="letter-spacing: 0.44px;">0</span></td><td></td><td><span style="letter-spacing: 0.44px;">0</span></td><td><u><span style="letter-spacing: 0.44px;">0</span></u></td><td><span style="letter-spacing: 0.44px;">0</span></td><td><span style="letter-spacing: 0.44px;">0</span></td><td class="ac"><span style="letter-spacing: 0.29px;">16m32s MAINT</span></td><td class="ac"></td><td class="ac"><span style="letter-spacing: 0.44px;">128</span></td><td class="ac"><span style="letter-spacing: 0.33px;">Y</span></td><td class="ac"><span style="letter-spacing: -0.33px;">-</span></td><td><u><span style="letter-spacing: 0.44px;">0</span></u></td><td><span style="letter-spacing: 0.44px;">0</span></td><td><span style="letter-spacing: 0.24px;">16m32s</span></td><td class="ac"><span style="letter-spacing: -0.33px;">-</span></td></tr>
<tr class="maintain"><td class="ac"><a class="lfsb"><span style="letter-spacing: 0.38px;">SRV_eMM4Y</span></a></td><td><span style="letter-spacing: 0.44px;">0</span></td><td><span style="letter-spacing: 0.44px;">0</span></td><td><span style="letter-spacing: -0.33px;">-</span></td><td><span style="letter-spacing: 0.44px;">0</span></td><td><span style="letter-spacing: 0.44px;">0</span></td><td></td><td><u><span style="letter-spacing: 0.44px;">0</span></u></td><td><span style="letter-spacing: 0.44px;">0</span></td><td><span style="letter-spacing: -0.33px;">-</span></td><td><u><span style="letter-spacing: 0.44px;">0</span></u></td><td><span style="letter-spacing: 0.44px;">0</span></td><td><span style="letter-spacing: 0.44px;">?</span></td><td><span style="letter-spacing: 0.44px;">0</span></td><td><span style="letter-spacing: 0.44px;">0</span></td><td></td><td><span style="letter-spacing: 0.44px;">0</span></td><td></td><td><span style="letter-spacing: 0.44px;">0</span></td><td><u><span style="letter-spacing: 0.44px;">0</span></u></td><td><span style="letter-spacing: 0.44px;">0</span></td><td><span style="letter-spacing: 0.44px;">0</span></td><td class="ac"><span style="letter-spacing: 0.29px;">16m32s MAINT</span></td><td class="ac"></td><td class="ac"><span style="letter-spacing: 0.44px;">128</span></td><td class="ac"><span style="letter-spacing: 0.33px;">Y</span></td><td class="ac"><span style="letter-spacing: -0.33px;">-</span></td><td><u><span style="letter-spacing: 0.44px;">0</span></u></td><td><span style="letter-spacing: 0.44px;">0</span></td><td><span style="letter-spacing: 0.24px;">16m32s</span></td><td class="ac"><span style="letter-spacing: -0.33px;">-</span></td></tr>
<tr class="maintain"><td class="ac"><a class="lfsb"><span style="letter-spacing: 0.27px;">SRV_Igv1u</span></a></td><td><span style="letter-spacing: 0.44px;">0</span></td><td><span style="letter-spacing: 0.44px;">0</span></td><td><span style="letter-spacing: -0.33px;">-</span></td><td><span style="letter-spacing: 0.44px;">0</span></td><td><span style="letter-spacing: 0.44px;">0</span></td><td></td><td><u><span style="letter-spacing: 0.44px;">0</span></u></td><td><span style="letter-spacing: 0.44px;">0</span></td><td><span style="letter-spacing: -0.33px;">-</span></td><td><u><span style="letter-spacing: 0.44px;">0</span></u></td><td><span style="letter-spacing: 0.44px;">0</span></td><td><span style="letter-spacing: 0.44px;">?</span></td><td><span style="letter-spacing: 0.44px;">0</span></td><td><span style="letter-spacing: 0.44px;">0</span></td><td></td><td><span style="letter-spacing: 0.44px;">0</span></td><td></td><td><span style="letter-spacing: 0.44px;">0</span></td><td><u><span style="letter-spacing: 0.44px;">0</span></u></td><td><span style="letter-spacing: 0.44px;">0</span></td><td><span style="letter-spacing: 0.44px;">0</span></td><td class="ac"><span style="letter-spacing: 0.29px;">16m32s MAINT</span></td><td class="ac"></td><td class="ac"><span style="letter-spacing: 0.44px;">128</span></td><td class="ac"><span style="letter-spacing: 0.33px;">Y</span></td><td class="ac"><span style="letter-spacing: -0.33px;">-</span></td><td><u><span style="letter-spacing: 0.44px;">0</span></u></td><td><span style="letter-spacing: 0.44px;">0</span></td><td><span style="letter-spacing: 0.24px;">16m32s</span></td><td class="ac"><span style="letter-spacing: -0.33px;">-</span></td></tr>
<tr class="active_up"><td class="ac"><a class="lfsb"><span style="letter-spacing: 0.21px;">SRV_SfwiF</span></a></td><td><span style="letter-spacing: 0.44px;">0</span></td><td><span style="letter-spacing: 0.44px;">0</span></td><td><span style="letter-spacing: -0.33px;">-</span></td><td><span style="letter-spacing: 0.44px;">0</span></td><td><span style="letter-spacing: 0.44px;">1</span></td><td></td><td><u><span style="letter-spacing: 0.44px;">0</span></u></td><td><span style="letter-spacing: 0.44px;">1</span></td><td><span style="letter-spacing: -0.33px;">-</span></td><td><u><span style="letter-spacing: 0.44px;">1</span></u></td><td><span style="letter-spacing: 0.44px;">1</span></td><td><span style="letter-spacing: 0.2px;">11m6s</span></td><td><span style="letter-spacing: 0.44px;">306</span></td><td><span style="letter-spacing: 0.44px;">153</span></td><td></td><td><span style="letter-spacing: 0.44px;">0</span></td><td></td><td><span style="letter-spacing: 0.44px;">0</span></td><td><u><span style="letter-spacing: 0.44px;">0</span></u></td><td><span style="letter-spacing: 0.44px;">0</span></td><td><span style="letter-spacing: 0.44px;">0</span></td><td class="ac"><span style="letter-spacing: 0.19px;">16m32s UP</span></td><td class="ac"><u><span style="letter-spacing: 0.29px;">L4OK in 0ms</span></u></td><td class="ac"><span style="letter-spacing: 0.44px;">128</span></td><td class="ac"><span style="letter-spacing: 0.33px;">Y</span></td><td class="ac"><span style="letter-spacing: -0.33px;">-</span></td><td><u><span style="letter-spacing: 0.44px;">0</span></u></td><td><span style="letter-spacing: 0.44px;">0</span></td><td><span style="letter-spacing: -0.28px;">0s</span></td><td class="ac"><span style="letter-spacing: -0.33px;">-</span></td></tr>
<tr class="maintain"><td class="ac"><a class="lfsb"><span style="letter-spacing: 0.28px;">SRV_tTPRo</span></a></td><td><span style="letter-spacing: 0.44px;">0</span></td><td><span style="letter-spacing: 0.44px;">0</span></td><td><span style="letter-spacing: -0.33px;">-</span></td><td><span style="letter-spacing: 0.44px;">0</span></td><td><span style="letter-spacing: 0.44px;">0</span></td><td></td><td><u><span style="letter-spacing: 0.44px;">0</span></u></td><td><span style="letter-spacing: 0.44px;">0</span></td><td><span style="letter-spacing: -0.33px;">-</span></td><td><u><span style="letter-spacing: 0.44px;">0</span></u></td><td><span style="letter-spacing: 0.44px;">0</span></td><td><span style="letter-spacing: 0.44px;">?</span></td><td><span style="letter-spacing: 0.44px;">0</span></td><td><span style="letter-spacing: 0.44px;">0</span></td><td></td><td><span style="letter-spacing: 0.44px;">0</span></td><td></td><td><span style="letter-spacing: 0.44px;">0</span></td><td><u><span style="letter-spacing: 0.44px;">0</span></u></td><td><span style="letter-spacing: 0.44px;">0</span></td><td><span style="letter-spacing: 0.44px;">0</span></td><td class="ac"><span style="letter-spacing: 0.29px;">16m32s MAINT</span></td><td class="ac"></td><td class="ac"><span style="letter-spacing: 0.44px;">128</span></td><td class="ac"><span style="letter-spacing: 0.33px;">Y</span></td><td class="ac"><span style="letter-spacing: -0.33px;">-</span></td><td><u><span style="letter-spacing: 0.44px;">0</span></u></td><td><span style="letter-spacing: 0.44px;">0</span></td><td><span style="letter-spacing: 0.24px;">16m32s</span></td><td class="ac"><span style="letter-spacing: -0.33px;">-</span></td></tr>
<tr class="maintain"><td class="ac"><a class="lfsb"><span style="letter-spacing: 0.36px;">SRV_jmfaI</span></a></td><td><span style="letter-spacing: 0.44px;">0</span></td><td><span style="letter-spacing: 0.44px;">0</span></td><td><span style="letter-spacing: -0.33px;">-</span></td><td><span style="letter-spacing: 0.44px;">0</span></td><td><span style="letter-spacing: 0.44px;">0</span></td><td></td><td><u><span style="letter-spacing: 0.44px;">0</span></u></td><td><span style="letter-spacing: 0.44px;">0</span></td><td><span style="letter-spacing: -0.33px;">-</span></td><td><u><span style="letter-spacing: 0.44px;">0</span></u></td><td><span style="letter-spacing: 0.44px;">0</span></td><td><span style="letter-spacing: 0.44px;">?</span></td><td><span style="letter-spacing: 0.44px;">0</span></td><td><span style="letter-spacing: 0.44px;">0</span></td><td></td><td><span style="letter-spacing: 0.44px;">0</span></td><td></td><td><span style="letter-spacing: 0.44px;">0</span></td><td><u><span style="letter-spacing: 0.44px;">0</span></u></td><td><span style="letter-spacing: 0.44px;">0</span></td><td><span style="letter-spacing: 0.44px;">0</span></td><td class="ac"><span style="letter-spacing: 0.29px;">16m32s MAINT</span></td><td class="ac"></td><td class="ac"><span style="letter-spacing: 0.44px;">128</span></td><td class="ac"><span style="letter-spacing: 0.33px;">Y</span></td><td class="ac"><span style="letter-spacing: -0.33px;">-</span></td><td><u><span style="letter-spacing: 0.44px;">0</span></u></td><td><span style="letter-spacing: 0.44px;">0</span></td><td><span style="letter-spacing: 0.24px;">16m32s</span></td><td class="ac"><span style="letter-spacing: -0.33px;">-</span></td></tr>
<tr class="maintain"><td class="ac"><a class="lfsb"><span style="letter-spacing: 0.27px;">SRV_xQ2pL</span></a></td><td><span style="letter-spacing: 0.44px;">0</span></td><td><span style="letter-spacing: 0.44px;">0</span></td><td><span style="letter-spacing: -0.33px;">-</span></td><td><span style="letter-spacing: 0.44px;">0</span></td><td><span style="letter-spacing: 0.44px;">0</span></td><td></td><td><u><span style="letter-spacing: 0.44px;">0</span></u></td><td><span style="letter-spacing: 0.44px;">0</span></td><td><span style="letter-spacing: -0.33px;">-</span></td><td><u><span style="letter-spacing: 0.44px;">0</span></u></td><td><span style="letter-spacing: 0.44px;">0</span></td><td><span style="letter-spacing: 0.44px;">?</span></td><td><span style="letter-spacing: 0.44px;">0</span></td><td><span style="letter-spacing: 0.44px;">0</span></td><td></td><td><span style="letter-spacing: 0.44px;">0</span></td><td></td><td><span style="letter-spacing: 0.44px;">0</span></td><td><u><span style="letter-spacing: 0.44px;">0</span></u></td><td><span style="letter-spacing: 0.44px;">0</span></td><td><span style="letter-spacing: 0.44px;">0</span></td><td class="ac"><span style="letter-spacing: 0.29px;">16m32s MAINT</span></td><td class="ac"></td><td class="ac"><span style="letter-spacing: 0.44px;">128</span></td><td class="ac"><span style="letter-spacing: 0.33px;">Y</span></td><td class="ac"><span style="letter-spacing: -0.33px;">-</span></td><td><u><span style="letter-spacing: 0.44px;">0</span></u></td><td><span style="letter-spacing: 0.44px;">0</span></td><td><span style="letter-spacing: 0.24px;">16m32s</span></td><td class="ac"><span style="letter-spacing: -0.33px;">-</span></td></tr>
</tbody></table><p>
</p></div>
</body></html>
